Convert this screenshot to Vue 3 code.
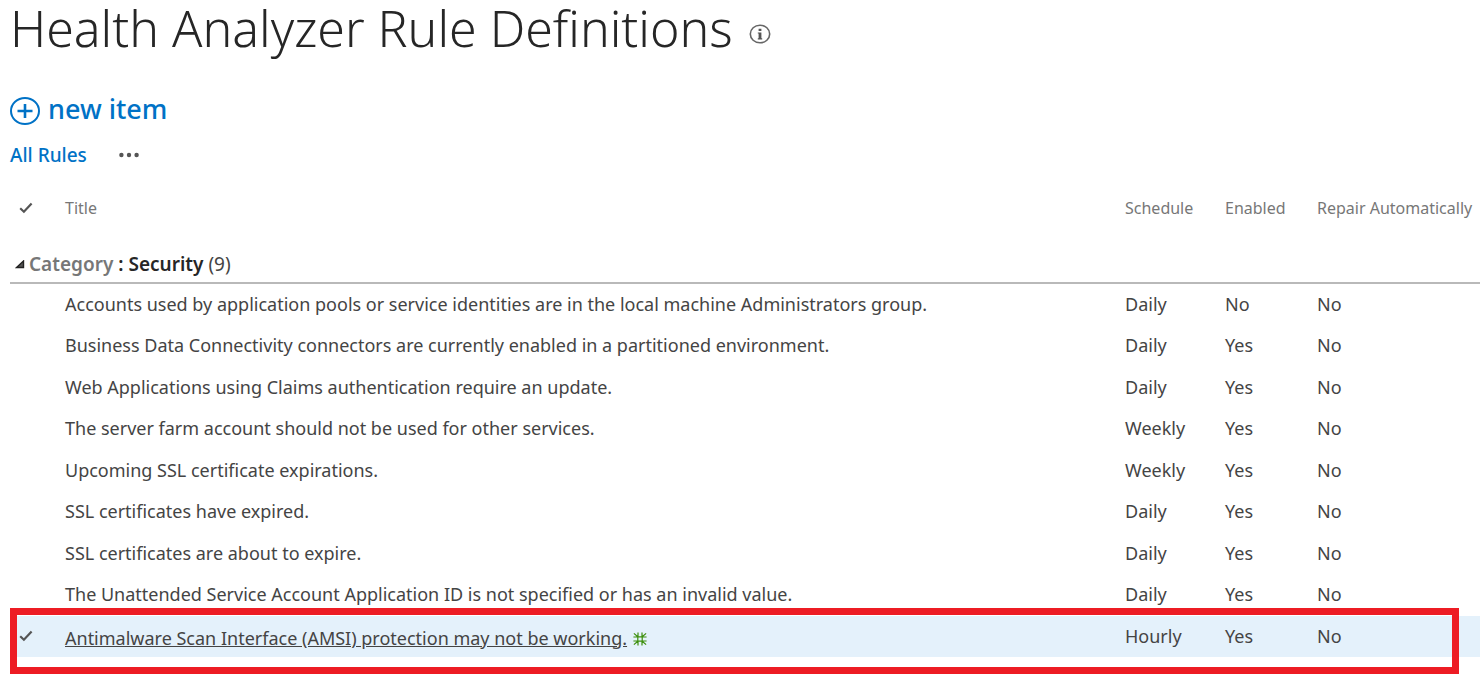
<script setup>
const rules = [
  { title: 'Accounts used by application pools or service identities are in the local machine Administrators group.', schedule: 'Daily', enabled: 'No', repair: 'No' },
  { title: 'Business Data Connectivity connectors are currently enabled in a partitioned environment.', schedule: 'Daily', enabled: 'Yes', repair: 'No' },
  { title: 'Web Applications using Claims authentication require an update.', schedule: 'Daily', enabled: 'Yes', repair: 'No' },
  { title: 'The server farm account should not be used for other services.', schedule: 'Weekly', enabled: 'Yes', repair: 'No' },
  { title: 'Upcoming SSL certificate expirations.', schedule: 'Weekly', enabled: 'Yes', repair: 'No' },
  { title: 'SSL certificates have expired.', schedule: 'Daily', enabled: 'Yes', repair: 'No' },
  { title: 'SSL certificates are about to expire.', schedule: 'Daily', enabled: 'Yes', repair: 'No' },
  { title: 'The Unattended Service Account Application ID is not specified or has an invalid value.', schedule: 'Daily', enabled: 'Yes', repair: 'No' },
  { title: 'Antimalware Scan Interface (AMSI) protection may not be working.', schedule: 'Hourly', enabled: 'Yes', repair: 'No', selected: true }
]
</script>

<template>
  <main class="page">
    <header class="heading">
      <h1>Health Analyzer Rule Definitions</h1>
      <button class="info" type="button" aria-label="About this list">
        <svg width="22" height="20" viewBox="0 0 22 20">
          <ellipse cx="11" cy="10" rx="9.7" ry="8.8" fill="none" stroke="#666" stroke-width="1.6" />
          <path d="M9.6 4.7h2.8v2.2H9.6zM8.8 8.5h3.6v5.8h.8v1.2H8.8v-1.2h.8V9.6h-.8z" fill="#555" />
        </svg>
      </button>
    </header>

    <a class="new-item" href="#new">
      <svg width="32" height="30" viewBox="0 0 32 30">
        <ellipse cx="15" cy="15" rx="14" ry="13" fill="none" stroke="#0072c6" stroke-width="2" />
        <path d="M15 8v14M7.5 15h15" fill="none" stroke="#0072c6" stroke-width="2.6" />
      </svg>
      <span>new item</span>
    </a>

    <nav class="views">
      <a href="#all">All Rules</a>
      <button class="more" type="button" aria-label="More views">
        <svg width="20" height="6" viewBox="0 0 20 6" fill="#555">
          <circle cx="2.4" cy="3" r="2.2" /><circle cx="10" cy="3" r="2.2" /><circle cx="17.6" cy="3" r="2.2" />
        </svg>
      </button>
    </nav>

    <table class="rules">
      <colgroup>
        <col class="c-check"><col><col class="c-schedule"><col class="c-enabled"><col class="c-repair">
      </colgroup>
      <thead>
        <tr>
          <th class="check" scope="col" aria-label="Selected">
            <svg width="14" height="12" viewBox="0 0 14 12"><path d="M1.2 6.3 4.9 9.8 12.6 1.6" fill="none" stroke="#555" stroke-width="2.2" /></svg>
          </th>
          <th scope="col">Title</th>
          <th scope="col">Schedule</th>
          <th scope="col">Enabled</th>
          <th scope="col">Repair Automatically</th>
        </tr>
      </thead>
      <tbody>
        <tr class="group">
          <td colspan="5">
            <button class="toggle" type="button">
              <svg width="10" height="9" viewBox="0 0 10 9"><path d="M8.5 1v6.5H1.5z" fill="#555" stroke="#222" stroke-width="1.4" /></svg>
              <span><b class="field">Category</b><b> : Security</b> (9)</span>
            </button>
          </td>
        </tr>
      </tbody>
      <tbody class="items">
        <tr v-for="rule in rules" :key="rule.title" :class="{ selected: rule.selected }">
          <td class="check">
            <svg v-if="rule.selected" width="14" height="12" viewBox="0 0 14 12"><path d="M1.2 6.3 4.9 9.8 12.6 1.6" fill="none" stroke="#555" stroke-width="2.2" /></svg>
            <span v-if="rule.selected" class="callout"></span>
          </td>
          <td class="title">
            <a href="#rule">{{ rule.title }}</a>
            <svg v-if="rule.selected" class="new" width="14" height="14" viewBox="0 0 14 14">
              <path d="M4.8 4.8h4.4v4.4H4.8zM4.8 4.8.9 1.4M9.2 4.8l3.9-3.4M4.8 9.2.9 12.6M9.2 9.2l3.9 3.4M5 4.8V.6M9 4.8V.6M5 9.2v4.2M9 9.2v4.2M4.8 5H.4M9.2 5h4.4M4.8 9H.4M9.2 9h4.4" fill="none" stroke="#3c8f0c" stroke-width="1.2" />
            </svg>
          </td>
          <td>{{ rule.schedule }}</td>
          <td>{{ rule.enabled }}</td>
          <td>{{ rule.repair }}</td>
        </tr>
      </tbody>
    </table>
  </main>
</template>

<style>
body {
  background: #fff;
}
</style>

<style scoped>
.page {
  padding: 0 0 20px 10px;
  color: #444;
  font-family: "Noto Sans", "Open Sans", sans-serif;
  font-size: 18px;
  line-height: 24px;
}
button {
  display: flex;
  align-items: center;
  padding: 0;
  border: 0;
  background: none;
  color: inherit;
  font: inherit;
  cursor: pointer;
}
a {
  color: inherit;
  text-decoration: none;
}
svg {
  display: block;
  flex: none;
}
.heading {
  display: flex;
  align-items: center;
  gap: 16px;
}
h1 {
  margin: 0;
  color: #262626;
  font-size: 50px;
  font-weight: 300;
  line-height: 56px;
}
.info {
  padding-top: 12px;
}
.new-item {
  display: flex;
  align-items: center;
  gap: 6px;
  width: max-content;
  margin-top: 35px;
  color: #0072c6;
  font-size: 27px;
  font-weight: 500;
  line-height: 36px;
}
.new-item svg {
  margin-top: 4px;
}
.views {
  display: flex;
  align-items: center;
  gap: 32px;
  margin-top: 16px;
  color: #0072c6;
  font-size: 19px;
  font-weight: 500;
}
.rules {
  width: 100%;
  margin-top: 17px;
  border-collapse: separate;
  border-spacing: 0;
  table-layout: fixed;
}
.c-check {
  width: 55px;
}
.c-schedule {
  width: 100px;
}
.c-enabled {
  width: 92px;
}
.c-repair {
  width: 163px;
}
th,
td {
  padding: 0;
  text-align: left;
  white-space: nowrap;
}
th {
  height: 48px;
  color: #777;
  font-size: 16px;
  font-weight: 400;
}
.group td {
  height: 52px;
  padding-top: 14px;
  box-sizing: border-box;
  border-bottom: 2px solid #b9b9b9;
}
.toggle {
  gap: 4px;
  padding-left: 5px;
}
.toggle span {
  font-size: 19px;
}
.toggle b {
  color: #262626;
  font-weight: 600;
}
.toggle .field {
  color: #777;
}
.items tr {
  height: 41px;
}
.items tr:nth-child(even) {
  height: 42px;
}
.items td {
  padding-bottom: 2px;
}
.check,
.items .check {
  padding-left: 9px;
}
.selected {
  position: relative;
  background: #e4f1fb;
}
.selected .title {
  padding-top: 4px;
}
.selected a {
  text-decoration: underline;
}
.new {
  display: inline-block;
  margin-left: 6px;
  vertical-align: -1px;
}
.callout {
  position: absolute;
  inset: -8px 21px -17px 0;
  border: 7px solid #ed1c24;
  pointer-events: none;
}
</style>
